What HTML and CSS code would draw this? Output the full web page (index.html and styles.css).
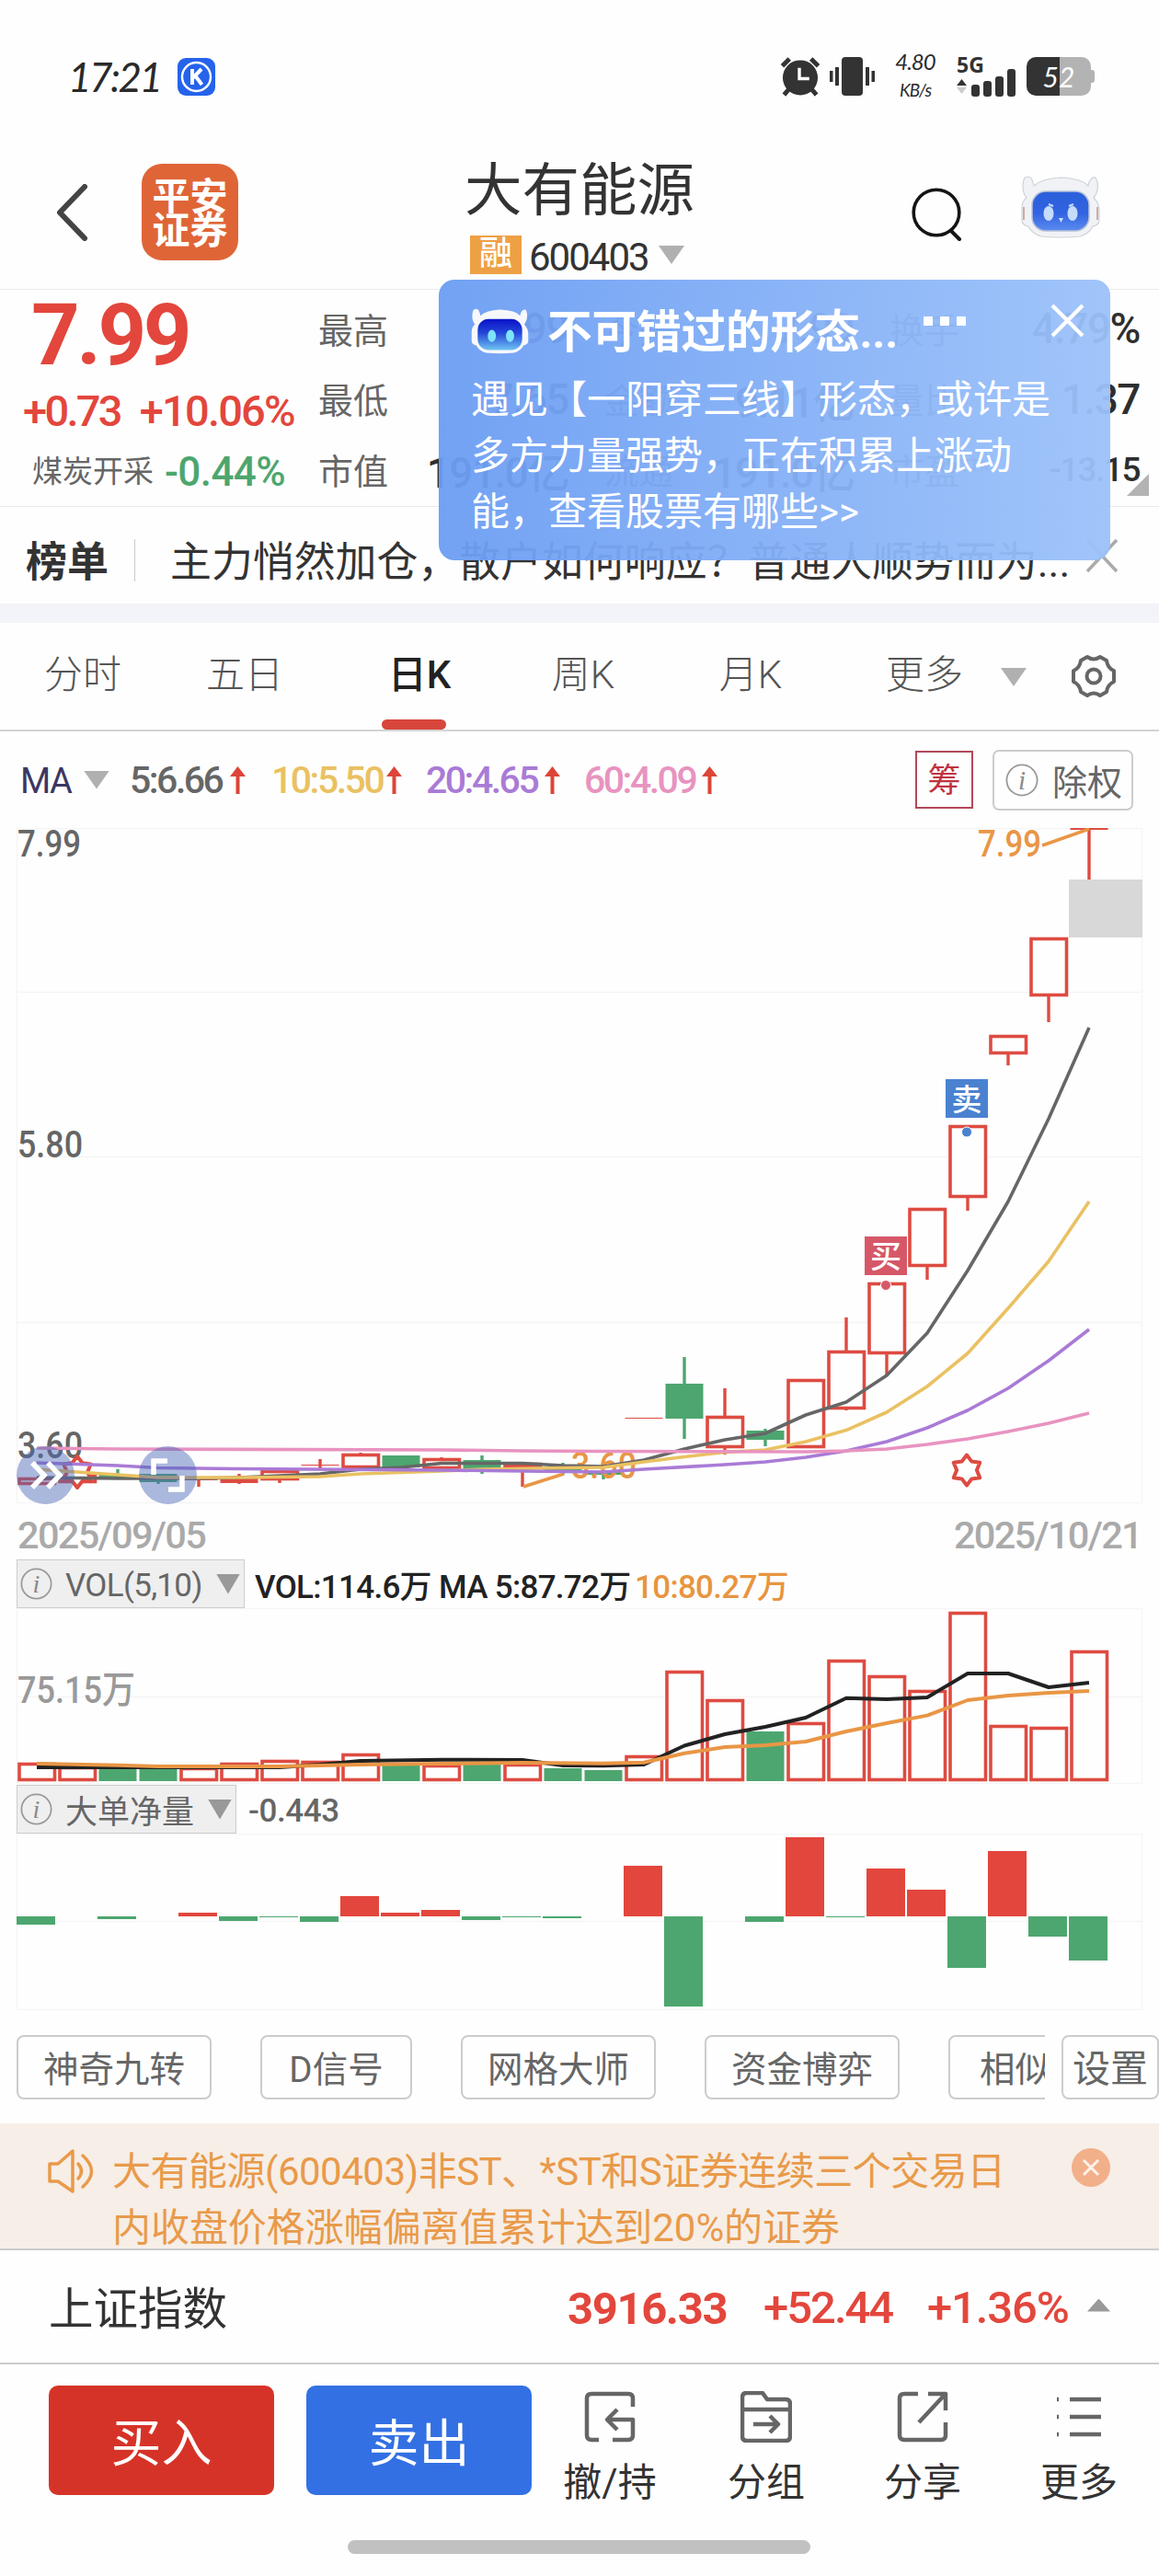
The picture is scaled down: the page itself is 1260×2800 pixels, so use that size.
FILE: index.html
```html
<!DOCTYPE html>
<html lang="zh-CN">
<head>
<meta charset="utf-8">
<title>大有能源 600403</title>
<link rel="stylesheet" href="styles.css">
</head>
<body>
<svg class="defs" width="0" height="0">
  <defs>
    <linearGradient id="face" x1="0" y1="0" x2="0" y2="1"><stop offset="0" stop-color="#2b5fdc"/><stop offset=".55" stop-color="#3263e0"/><stop offset="1" stop-color="#5b8cf0"/></linearGradient>
    <linearGradient id="faceDeep" x1="0" y1="0" x2="0" y2="1"><stop offset="0" stop-color="#0a12c8"/><stop offset=".45" stop-color="#2446d8"/><stop offset="1" stop-color="#6fc4f2"/></linearGradient>
    <symbol id="info" viewBox="0 0 36 36"><circle cx="18" cy="18" r="16.6" fill="none" stroke="#999" stroke-width="1.8"/><text x="18" y="28" font-family="Liberation Serif, serif" font-style="italic" font-size="29" fill="#8a8a8a" text-anchor="middle">i</text></symbol>
    <symbol id="up" viewBox="0 0 17 30"><path d="M8.500 0L17 11H10.500V30H6.500V11H0Z" fill="#dc4537"/></symbol>
  </defs>
</svg>
<main class="app">
  <div class="status">
    <span class="clock">17:21</span>
    <svg class="kapp" viewBox="0 0 41 41"><rect width="41" height="41" rx="9" fill="#2563eb"/><circle cx="20.500" cy="20.500" r="15.500" fill="none" stroke="#fff" stroke-width="2.400"/><path d="M16 12v17M26 12l-9 9.500M19 19l7.500 10" fill="none" stroke="#fff" stroke-width="4"/></svg>
    <svg class="alarm" viewBox="0 0 44 44" fill="#333"><circle cx="22" cy="23" r="19.500"/><path d="M2 10l8-8M42 10l-8-8" stroke="#333" stroke-width="5"/><path d="M10 35l-6 7M34 35l6 7" stroke="#333" stroke-width="5"/><path d="M21 12v12h11" fill="none" stroke="#fff" stroke-width="3.500"/></svg>
    <svg class="vibrate" viewBox="0 0 49 42" fill="#333"><rect x="13" width="23" height="42" rx="4"/><rect x="6" y="11" width="4" height="20"/><rect y="15" width="3.500" height="12"/><rect x="39" y="11" width="4" height="20"/><rect x="45.500" y="15" width="3.500" height="12"/></svg>
    <span class="speed"><span>4.80</span><span>KB/s</span></span>
    <span class="signal"><b>5G</b>
      <svg viewBox="0 0 64 30"><path d="M0 18h11L5.500 11z" fill="#333"/><path d="M0 20h11L5.500 27z" fill="#ccc"/><rect x="16" y="17" width="9" height="13" rx="3" fill="#333"/><rect x="29" y="13" width="9" height="17" rx="3" fill="#333"/><rect x="42" y="8" width="9" height="22" rx="3" fill="#333"/><rect x="55" y="0" width="9" height="30" rx="3" fill="#333"/></svg>
    </span>
    <span class="battery">52</span>
  </div>

  <header class="header">
    <svg class="back" viewBox="0 0 35 62"><path d="M31 3L4 31l27 28" fill="none" stroke="#444" stroke-width="6" stroke-linecap="round" stroke-linejoin="round"/></svg>
    <div class="logo">平安<br>证券</div>
    <div class="name">
      <h1>大有能源</h1>
      <div class="code"><span class="tag">融</span><span class="num">600403</span><i class="tri"></i></div>
    </div>
    <svg class="search" viewBox="0 0 56 58"><circle cx="27" cy="27" r="24.800" fill="none" stroke="#151515" stroke-width="3.600"/><path d="M43 47l9 9" stroke="#151515" stroke-width="4" stroke-linecap="round"/></svg>
    <svg class="robot" viewBox="0 0 86 68">
      <path d="M4 2C1 8 1 18 6 24 2 27 1 30 1 38v10q0 6 7 7 4 8 14 11 20 2 42 0 10-3 14-11 7-1 7-7V38q0-8-6-14c5-6 6-16 2-22-4-1-7 3-8 9Q66 3 43 2 23 3 14 11 12 1 8 1z" fill="#f0f2f6" stroke="#ced2d8" stroke-width="1.200"/>
      <path d="M3 34v14M83 34v14" stroke="#d3aaa5" stroke-width="2"/>
      <rect x="12" y="17" width="62" height="43" rx="15" fill="url(#face)" stroke="#b9c2d6" stroke-width="1.500"/>
      <ellipse cx="30" cy="41" rx="5.500" ry="8" fill="#c6dcfb"/><ellipse cx="56" cy="41" rx="5.500" ry="8" fill="#c6dcfb"/>
      <path d="M41 46h5l-2.500 5z" fill="#c6dcfb"/><path d="M30 31l5 2M52 33l5-2" stroke="#c6dcfb" stroke-width="2"/>
    </svg>
  </header>

  <section class="quote">
    <div class="price">
      <strong>7.99</strong>
      <div class="change"><span>+0.73</span><span class="pct">+10.06%</span></div>
      <div class="industry"><span>煤炭开采</span><em>-0.44%</em></div>
    </div>
    <div class="stats">
      <div><span>最高</span><b>7.99</b></div><div><span>今开</span><b>7.99</b></div><div><span>换手</span><b>4.79%</b></div>
      <div><span>最低</span><b>7.65</b></div><div><span>金额</span><b>9.11亿</b></div><div><span>量比</span><b>1.37</b></div>
      <div><span>市值</span><b>191.0亿</b></div><div><span>流通</span><b>191.0亿</b></div><div><span>市盈<sup>TTM</sup></span><b class="small">-13.15</b></div>
    </div>
    <i class="corner"></i>
  </section>

  <section class="news">
    <b>榜单</b><i class="bar"></i><span>主力悄然加仓，散户如何响应？普通人顺势而为...</span>
    <svg viewBox="0 0 36 38"><path d="M2 2l32 34M34 2L2 36" stroke="#aaa" stroke-width="3.500"/></svg>
  </section>

  <aside class="tip">
    <div class="tip-head">
      <svg class="robot-s" viewBox="0 0 86 68">
        <path d="M4 2C1 8 1 18 6 24 2 27 1 30 1 38v10q0 6 7 7 4 8 14 11 20 2 42 0 10-3 14-11 7-1 7-7V38q0-8-6-14c5-6 6-16 2-22-4-1-7 3-8 9Q66 3 43 2 23 3 14 11 12 1 8 1z" fill="#f7f8fb"/>
        <rect x="10" y="16" width="66" height="46" rx="16" fill="url(#faceDeep)"/>
        <ellipse cx="31" cy="41" rx="6" ry="9" fill="#7fe3fb"/><ellipse cx="58" cy="41" rx="6" ry="9" fill="#7fe3fb"/>
      </svg>
      <b>不可错过的形态...</b>
      <svg class="dots" viewBox="0 0 46 10" fill="#fff"><rect width="10" height="10"/><rect x="18" width="10" height="10"/><rect x="36" width="10" height="10"/></svg>
      <svg class="close" viewBox="0 0 37 37"><path d="M2 2l33 33M35 2L2 35" stroke="#fff" stroke-width="4.200"/></svg>
    </div>
    <p>遇见【一阳穿三线】形态，或许是<br>多方力量强势，正在积累上涨动<br>能，查看股票有哪些&gt;&gt;</p>
  </aside>

  <nav class="tabs">
    <span>分时</span><span>五日</span><span class="on">日K</span><span>周K</span><span>月K</span><span>更多</span>
    <i class="tri"></i>
    <svg viewBox="0 0 52 52" fill="none" stroke="#666" stroke-width="4"><path d="M19 5Q26 10 33 5L40 9Q41 17 48 20V32Q41 35 40 43L33 47Q26 42 19 47L12 43Q11 35 4 32V20Q11 17 12 9Z" stroke-linejoin="round"/><circle cx="26" cy="26" r="7.500"/></svg>
  </nav>

  <div class="ma">
    <span class="ma-name">MA</span><i class="tri"></i>
    <span class="v m5">5:6.66</span><svg class="up"><use href="#up"/></svg>
    <span class="v m10">10:5.50</span><svg class="up"><use href="#up"/></svg>
    <span class="v m20">20:4.65</span><svg class="up"><use href="#up"/></svg>
    <span class="v m60">60:4.09</span><svg class="up"><use href="#up"/></svg>
    <span class="chou">筹</span>
    <span class="adj"><svg><use href="#info"/></svg>除权</span>
  </div>

  <svg class="chart" id="kline" viewBox="0 900 1260 735" width="1260" height="735"></svg>
  <div class="dates"><span>2025/09/05</span><span>2025/10/21</span></div>

  <div class="ind">
    <span class="pick vol"><svg><use href="#info"/></svg><span>VOL(5,10)</span><i class="tri dark"></i></span>
    <span class="k1">VOL:114.6万</span><span class="k2">MA 5:87.72万</span><span class="k3">10:80.27万</span>
  </div>
  <svg class="chart" id="volume" viewBox="0 1748 1260 192" width="1260" height="192"></svg>

  <div class="ind">
    <span class="pick net"><svg><use href="#info"/></svg><span>大单净量</span><i class="tri dark"></i></span>
    <span class="netv">-0.443</span>
  </div>
  <svg class="chart" id="flow" viewBox="0 1993 1260 192" width="1260" height="192"></svg>

  <div class="chips">
    <div class="scroll"><span>神奇九转</span><span class="d">D信号</span><span>网格大师</span><span>资金博弈</span><span class="cut">相似</span></div>
    <span class="set">设置</span>
  </div>

  <div class="notice">
    <svg class="horn" viewBox="0 0 50 50" fill="none" stroke="#e99a4a" stroke-width="3.500" stroke-linejoin="round"><path d="M2 17h9L27 3v44L11 36H2Z"/><path d="M33 17q7 8 0 16M38 8q19 17 0 34" stroke-linecap="round"/></svg>
    <p>大有能源(600403)非ST、*ST和S证券连续三个交易日<br><span>内收盘价格涨幅偏离值累计达到20%的证券</span></p>
    <svg class="x" viewBox="0 0 42 42"><circle cx="21" cy="21" r="21" fill="#f2b08a"/><path d="M13 13l16 16M29 13L13 29" stroke="#fdf3ea" stroke-width="3"/></svg>
  </div>

  <div class="index">
    <span class="iname">上证指数</span><b>3916.33</b><span class="i1">+52.44</span><span class="i2">+1.36%</span><i class="tri-up"></i>
  </div>

  <footer class="actions">
    <button class="buy">买入</button><button class="sell">卖出</button>
    <div class="act"><svg viewBox="0 0 56 56"><path d="M53 17V8q0-5-5-5H8Q3 3 3 8v40q0 5 5 5h8M31 53h17q5 0 5-5V31H26M36 20L25 31l11 11"/></svg><span>撤/持</span></div>
    <div class="act"><svg viewBox="0 0 56 56"><path d="M2 7q0-5 5-5h17l5 7h20q5 0 5 5v35q0 5-5 5H7q-5 0-5-5ZM2 20h52M14 36h26M32 27l9 9-9 9"/></svg><span>分组</span></div>
    <div class="act"><svg viewBox="0 0 56 56"><path d="M23 3H8Q3 3 3 8v40q0 5 5 5h40q5 0 5-5V34M34 3h19v18M53 3L24 34"/></svg><span>分享</span></div>
    <div class="act more"><svg viewBox="0 0 56 56"><path d="M4 9h2M18 9h34M4 28h2M18 28h34M4 47h2M18 47h34"/></svg><span>更多</span></div>
  </footer>
  <div class="home"></div>
</main>
<script src="chart.js"></script>
</body>
</html>
```
FILE: styles.css
```css
* { box-sizing: border-box; }
body { margin: 0; background: #fff; font-family: Roboto, "Noto Sans CJK SC", sans-serif; color: #333; }
.defs { position: absolute; }
.app { width: 1260px; height: 2800px; overflow: hidden; position: relative; background: #fefefe; display: flex; flex-direction: column; }
.app > * { flex: none; }
svg { display: block; }
i { font-style: normal; }
.tri { width: 28px; height: 20px; background: #b0b0b0; clip-path: polygon(0 0, 100% 0, 50% 100%); flex: none; }
.tri.dark { background: #999; }

.status { height: 170px; padding: 62px 74px 0 74px; display: flex; align-items: flex-start; }
.clock { width: 119px; font: italic 400 44px/43px Lato, sans-serif; letter-spacing: -2.500px; color: #2a2a2a; white-space: nowrap; }
.kapp { width: 41px; height: 41px; margin-top: 1px; }
.alarm { width: 44px; height: 43px; margin-left: auto; }
.vibrate { width: 49px; height: 42px; margin-left: 10px; }
.speed { width: 44px; margin: -11px 0 0 22px; display: flex; flex-direction: column; align-items: center; font: italic 400 24px/31px Lato, sans-serif; letter-spacing: -1px; color: #2a2a2a; }
.speed span + span { font-size: 19px; }
.signal { margin-left: 23px; width: 64px; }
.signal b { display: block; font: bold 23px/16px "Noto Sans", sans-serif; height: 13px; }
.signal svg { width: 64px; height: 30px; }
.battery { position: relative; margin-left: 12px; width: 70px; height: 42px; border-radius: 10px; background: linear-gradient(90deg, #333 36px, #b3b3b3 36px); color: #fff; font: italic 400 30px/42px Lato, sans-serif; text-align: center; }
.battery::after { content: ""; position: absolute; right: -4px; top: 14px; width: 4px; height: 14px; background: #b3b3b3; border-radius: 0 3px 3px 0; }

.header { height: 145px; padding-left: 61px; display: flex; align-items: flex-start; border-bottom: 1px solid #ebebeb; }
.back { width: 35px; height: 62px; margin-top: 30px; }
.logo { width: 105px; height: 105px; margin: 8px 0 0 58px; border-radius: 22px; background: #df6537; color: #fff; font-weight: 700; font-size: 41px; line-height: 37px; text-align: center; padding-top: 18px; }
.name { width: 252px; margin-left: 246px; }
h1 { margin: 0; font-size: 62.500px; font-weight: 400; line-height: 75px; height: 80px; white-space: nowrap; }
.code { display: flex; align-items: center; margin-left: 6px; height: 52px; margin-top: 1px; }
.tag { width: 56px; height: 42px; background: #eea044; color: #fff; font-size: 36px; line-height: 41px; text-align: center; font-weight: 500; }
.num { font-size: 42px; letter-spacing: -2px; margin-left: 8px; width: 141px; margin-top: 5px; }
.code .tri { margin-top: 0; }
.search { width: 56px; height: 58px; margin: 34px 0 0 234px; }
.robot { width: 86px; height: 68px; margin: 21px 0 0 63px; }

.quote { height: 236px; display: flex; position: relative; border-bottom: 1px solid #e8e8e8; }
.price { width: 346px; color: #e3463c; }
.price strong { display: block; margin: 4px 0 0 34px; font-size: 92px; line-height: 92px; letter-spacing: -3.500px; font-weight: 700; }
.change { display: flex; font-size: 47px; line-height: 50px; font-weight: 500; margin: 11px 0 0 25px; letter-spacing: -2.700px; white-space: nowrap; }
.pct { margin-left: 21px; letter-spacing: -1.800px; }
.industry { display: flex; align-items: center; margin: 16px 0 0 35px; font-size: 33px; line-height: 50px; color: #666; white-space: nowrap; }
.industry em { font-style: normal; color: #4da66f; font-size: 44px; font-weight: 500; margin-left: 12px; letter-spacing: -.6px; }
.stats { width: 893px; display: grid; grid-template-columns: 272px 272px 272px; grid-auto-rows: 76.500px; column-gap: 38.500px; padding-top: 4px; }
.stats div { display: flex; align-items: center; justify-content: space-between; font-size: 38px; color: #666; }
.stats div > span { padding-bottom: 2px; }
.stats b { font-weight: 500; font-size: 46px; color: #2e2e2e; letter-spacing: -1.500px; }
.stats b.small { font-size: 37px; }
.stats sup { font-size: 18px; line-height: 0; }
.corner { position: absolute; right: 11px; bottom: 11px; width: 24px; height: 24px; background: #b3b3b3; clip-path: polygon(100% 0, 100% 100%, 0 100%); }

.news { height: 126px; padding: 24px 0 0 28px; display: flex; align-items: flex-start; font-size: 45px; line-height: 74px; color: #333; white-space: nowrap; border-bottom: 21px solid #f3f4f9; }
.news b { width: 118px; font-weight: 700; }
.bar { width: 1px; height: 46px; background: #ccc; margin: 11px 38px 0 0; }
.news span { width: 995px; font-size: 44.900px; }
.news svg { width: 36px; height: 38px; margin-top: 10px; }

.tip { position: absolute; left: 477px; top: 304px; width: 730px; height: 305px; border-radius: 17px; background: linear-gradient(90deg, rgba(107, 157, 243, .95), rgba(156, 194, 250, .95)); color: #fff; padding: 0 0 0 35px; }
.tip-head { display: flex; height: 100px; padding-top: 26px; }
.robot-s { width: 63px; height: 50px; margin-top: 5px; }
.tip-head b { margin-left: 20px; width: 409px; font-size: 48.700px; line-height: 64px; font-weight: 700; white-space: nowrap; letter-spacing: -.2px; }
.dots { width: 46px; height: 10px; margin-top: 14px; }
.close { width: 37px; height: 37px; margin-left: 92px; }
.tip p { margin: 0; font-size: 42px; line-height: 61px; white-space: nowrap; }

.tabs { height: 118px; display: grid; grid-template-columns: 180px 172px 208px 148px 216px 162px 28px 52px; column-gap: 0; border-bottom: 2px solid #d3d3d3; font-size: 42px; font-weight: 300; color: #555; }
.tabs span { text-align: center; line-height: 114px; height: 116px; position: relative; }
.tabs .on { font-weight: 500; color: #222; }
.tabs .on::after { content: ""; position: absolute; left: 63px; bottom: 0; width: 70px; height: 11px; border-radius: 6px; background: #d8463b; }
.tabs .tri { margin: 49px 0 0 2px; }
.tabs svg { width: 52px; height: 52px; margin: 32px 0 0 49px; }

.ma { height: 105px; display: flex; align-items: center; padding: 0 28px 0 22px; white-space: nowrap; }
.ma-name { font-size: 38px; width: 69px; letter-spacing: -1.500px; color: #3b3763; margin-top: 3px; }
.v { font-size: 41px; font-weight: 500; letter-spacing: -2.500px; }
.m5 { margin-left: 22px; width: 109px; color: #666; }
.m10 { margin-left: 28px; width: 125px; color: #eac162; }
.m20 { margin-left: 26px; width: 129px; color: #a97bd6; }
.m60 { margin-left: 26px; width: 128px; color: #e893c0; }
.up { width: 17px; height: 30px; }
.chou { margin-left: auto; width: 63px; height: 63px; border: 2px solid #b2485a; color: #bf3340; font-size: 36px; line-height: 62px; text-align: center; }
.adj { margin-left: 21px; width: 153px; height: 66px; border: 2px solid #ccc; border-radius: 7px; display: flex; align-items: center; font-size: 38px; color: #666; padding-left: 12px; }
.adj svg { width: 36px; height: 36px; margin-right: 15px; }

.chart text { font-family: Roboto, "Noto Sans CJK SC", sans-serif; }
.dates { height: 60px; padding: 0 19px 0 19px; display: flex; justify-content: space-between; font-size: 41.500px; line-height: 67px; color: #aaa; font-weight: 500; letter-spacing: -1.700px; }
.ind { height: 53px; display: flex; align-items: center; padding-left: 18px; font-size: 35px; font-weight: 500; white-space: nowrap; color: #222; }
.pick { height: 53px; background: #efefef; border: 1px solid #ccc; display: flex; align-items: center; padding-left: 3px; color: #666; font-weight: 400; }
.pick svg { width: 35px; height: 35px; margin-right: 14px; }
.pick .tri { width: 26px; height: 22px; margin-right: 4px; margin-left: auto; }
.vol { width: 248px; }
.vol span { letter-spacing: -.7px; margin-top: 3px; }
.net { width: 239px; }
.k1 { margin-left: 11px; width: 200px; }
.k2 { width: 213px; }
.k3 { color: #e8953f; }
.k1, .k2, .k3 { letter-spacing: -.7px; }
.netv { margin-left: 13px; color: #666; letter-spacing: -.4px; margin-top: 3px; }

.chips { height: 123px; padding: 27px 0 0 18px; display: flex; font-size: 38.500px; color: #666; white-space: nowrap; }
.scroll { width: 1119px; overflow: hidden; display: flex; gap: 53px; margin-right: 18px; }
.chips span { flex: none; width: 212px; height: 70px; border: 2px solid #ccc; border-radius: 8px; text-align: center; line-height: 71px; }
.chips .d { width: 165px; }
.chips .cut { text-align: left; padding-left: 32px; }
.chips .set { width: 106px; font-size: 41px; }

.notice { height: 136px; background: #f6eee7; display: flex; align-items: flex-start; color: #e99a4a; padding: 22px 0 0 52px; }
.horn { width: 50px; height: 50px; margin-top: 5px; }
.notice p { margin: 0 0 0 20px; width: 1043px; font-size: 42px; line-height: 61px; white-space: nowrap; letter-spacing: -.5px; }
.notice p span { letter-spacing: -.05px; }
.notice .x { width: 42px; height: 42px; margin-top: 5px; }

.index { height: 124px; border-top: 2px solid #ccc; display: flex; align-items: center; padding-left: 53px; font-size: 49px; white-space: nowrap; color: #e3463c; }
.iname { color: #333; width: 564px; font-size: 48.500px; padding-bottom: 3px; }
.index b { width: 213px; letter-spacing: -1.400px; padding-top: 4px; }
.i1 { width: 178px; font-weight: 500; letter-spacing: -2px; padding-top: 2px; }
.i2 { width: 174px; font-weight: 500; letter-spacing: -1.100px; padding-top: 2px; }
.tri-up { width: 25px; height: 14px; background: #999; clip-path: polygon(50% 0, 100% 100%, 0 100%); margin-bottom: 3px; }

.actions { height: 193px; border-top: 2px solid #ccc; display: flex; padding: 23px 0 0 53px; align-items: flex-start; }
button { width: 245px; height: 119px; border: 0; border-radius: 10px; color: #fff; font: 400 55px/120px Roboto, "Noto Sans CJK SC", sans-serif; padding: 3px 0 0; }
.buy { background: #d63328; }
.sell { background: #3370e3; margin: 0 0 0 35px; }
.act { width: 170px; display: flex; flex-direction: column; align-items: center; font-size: 42px; line-height: 60px; color: #333; padding-top: 6px; }
.act svg { width: 56px; height: 56px; fill: none; stroke: #666; stroke-width: 4.500; stroke-linejoin: round; }
.act span { margin-top: 14px; }
.home { width: 503px; height: 15px; border-radius: 8px; background: #c1c1c1; margin-left: 378px; }
```
FILE: chart.js
```js
const RED = '#de4b41', GREEN = '#4da66f';
const x = i => 40 + 44 * i;

const line = (pts, color, w) =>
  `<polyline points="${pts.map(p => p.join(',')).join(' ')}" fill="none" stroke="${color}" stroke-width="${w}" stroke-linejoin="round"/>`;
const grid = (top, rows, bottom) =>
  `<rect x="18.500" y="${top + .5}" width="1223" height="${bottom - top - 1}" fill="none" stroke="#f5f5f5" stroke-width="1.500"/>` +
  rows.map(y => `<path d="M18 ${y}H1242" stroke="#f5f5f5" stroke-width="1.500"/>`).join('');
const txt = (s, px, y, size, color, width, extra = '') =>
  `<text x="${px}" y="${y}" font-size="${size}" fill="${color}" textLength="${width}" lengthAdjust="spacingAndGlyphs" ${extra}>${s}</text>`;
const box = (i, top, bottom) =>
  `<rect x="${x(i) - 19}" y="${top + 1.5}" width="38.500" height="${Math.max(bottom - top - 3, 1)}" fill="#fefefe" stroke="${RED}" stroke-width="3.600"/>`;
const star = (cx, cy, r) => {
  const p = [];
  for (let k = 0; k < 12; k++) {
    const a = Math.PI * k / 6 - Math.PI / 2, q = k % 2 ? r * .66 : r;
    p.push((cx + q * Math.cos(a)).toFixed(1) + ',' + (cy + q * Math.sin(a)).toFixed(1));
  }
  return `<polygon points="${p.join(' ')}" fill="#fefefe" stroke="${RED}" stroke-width="4" stroke-linejoin="round"/>`;
};

// [kind, body top, body bottom, wick top, wick bottom]
const candles = [
  ['r', 1606, 1614, 1606, 1614], ['r', 1603, 1612, 1603, 1612], ['g', 1603, 1606, 1597, 1606],
  ['g', 1602, 1611, 1602, 1613], ['-', 1608, 1609, 1608, 1616], ['R', 1607, 1612, 1602, 1613],
  ['r', 1598, 1609, 1598, 1612], ['-', 1592, 1593, 1586, 1596], ['r', 1580, 1596, 1579, 1596],
  ['g', 1582, 1595, 1582, 1595], ['r', 1585, 1597, 1584, 1597], ['g', 1587, 1597, 1582, 1602],
  ['r', 1590, 1596, 1590, 1616], ['g', 1596, 1600, 1590, 1603], ['g', 1600, 1603, 1600, 1608],
  ['-', 1541, 1542, 1541, 1542], ['g', 1504, 1542, 1475, 1564], ['r', 1539, 1574, 1509, 1581],
  ['g', 1555, 1565, 1553, 1572], ['r', 1499, 1574, 1499, 1574], ['r', 1468, 1532, 1432, 1533],
  ['r', 1394, 1472, 1394, 1495], ['r', 1313, 1377, 1313, 1391], ['r', 1223, 1302, 1223, 1316],
  ['r', 1125, 1146, 1125, 1158], ['r', 1019, 1083, 1019, 1111], ['-', 900, 902, 900, 956]
];
let s = grid(900, [1078.5, 1257.5, 1437.5], 1634);
s += txt('7.99', 19, 931, 41, '#666', 69, 'font-weight="500"') + txt('5.80', 19, 1258, 41, '#666', 71, 'font-weight="500"') + txt('3.60', 19, 1585, 41, '#666', 71, 'font-weight="500"');
candles.forEach(([k, t, b, wt, wb], i) => {
  const c = k === 'g' ? GREEN : RED;
  if (wb > wt + 1) s += `<path d="M${x(i)} ${wt}V${wb}" stroke="${c}" stroke-width="3.400"/>`;
  if (k === 'r') s += box(i, t, b);
  else s += `<rect x="${x(i) - 20.5}" y="${t}" width="41" height="${b - t}" fill="${c}"/>`;
});
s += '<rect x="1162" y="956" width="80" height="63" fill="#d8d8d8"/>';
s += star(84, 1600, 17);
s += '<path d="M1133 919L1184 901M569 1616L613 1602" stroke="#e99645" stroke-width="3.500"/>';
s += txt('7.99', 1063, 931, 41, '#e99645', 69, 'font-weight="500"') + txt('3.60', 621, 1607, 41, '#e99645', 71, 'font-weight="500"');
s += line([[40,1606],[128,1607],[216,1607],[260,1606],[348,1602],[392,1597],[436,1595],[480,1590.5],[568,1590.5],[612,1593],[656,1594],[700,1587],[744,1575],[788,1565],[832,1558],[876,1538],[920,1524],[964,1495],[1008,1449],[1052,1381],[1096,1306],[1140,1216],[1184,1117]], '#666', 3.6);
s += line([[40,1597],[128,1603],[172,1606],[260,1606],[348,1605],[392,1602],[480,1599],[524,1597],[612,1595.5],[656,1595],[700,1589],[744,1583.5],[788,1578.5],[832,1576],[876,1567],[920,1554.6],[964,1535],[1008,1507],[1052,1471],[1096,1422],[1140,1371],[1184,1306]], '#eac162', 3.6);
s += line([[40,1590],[128,1593],[172,1595.5],[260,1596.5],[480,1598],[568,1599],[656,1600],[700,1597],[788,1592],[832,1589],[876,1584],[920,1577],[964,1567],[1008,1552],[1052,1533],[1096,1509],[1140,1479],[1184,1445]], '#a97bd6', 3.6);
s += line([[40,1574],[128,1575],[480,1576],[568,1577],[656,1577.5],[876,1578],[920,1577],[964,1575],[1008,1570],[1052,1564],[1096,1556],[1140,1547],[1184,1536]], '#e893c0', 3.6);
s += star(1051, 1598, 16.5);
s += '<rect x="940" y="1344" width="46" height="42" fill="#d65868"/>' + '<text x="963" y="1378" font-size="34" font-weight="500" fill="#fff" text-anchor="middle">买</text><circle cx="963" cy="1397" r="5.500" fill="#d65868" stroke="#fff"/>';
s += '<rect x="1028" y="1173" width="46" height="42" fill="#4a82d0"/>' + '<text x="1051" y="1207" font-size="33" font-weight="500" fill="#fff" text-anchor="middle">卖</text><circle cx="1051" cy="1230.500" r="5.500" fill="#4a82d0" stroke="#fff"/>';
s += '<circle cx="49.500" cy="1603.500" r="31.500" fill="#4a66b8" opacity=".46"/><circle cx="182.500" cy="1603.500" r="31.500" fill="#4a66b8" opacity=".46"/>';
s += '<path d="M35 1590l13 13.500L35 1617M52 1590l13 13.500L52 1617M167 1603V1588H182M183 1619H198V1604" fill="none" stroke="#fff" stroke-width="5.500"/>';
document.getElementById('kline').innerHTML = s;

// [kind, top] – every column stands on the same base line
const vol = 'r1916 r1920 g1921 g1923 r1921 r1916 r1913 r1914 r1906 g1918 r1918 g1917 r1917 g1922 g1924 r1908 r1816 r1847 g1882 r1872 r1804 r1821 r1837 r1752 r1875 r1877 r1794'.split(' ');
s = grid(1748, [1844.5], 1939);
s += txt('75.15万', 19, 1851, 41, '#999', 128, 'font-weight="500"');
vol.forEach((v, i) => {
  const t = +v.slice(1);
  s += v[0] === 'r' ? box(i, t, 1936) : `<rect x="${x(i) - 20.5}" y="${t}" width="41" height="${1936 - t}" fill="${GREEN}"/>`;
});
s += line([[40,1921],[304,1921],[348,1918],[392,1914],[480,1912.7],[568,1913],[612,1919],[656,1919.3],[700,1918],[744,1897.5],[788,1885],[832,1877],[876,1867],[920,1845.7],[964,1847],[1008,1845],[1052,1819],[1096,1819],[1140,1834],[1184,1829]], '#222', 4);
s += line([[40,1917],[128,1918.7],[172,1920],[304,1920],[392,1918],[480,1917],[568,1916],[656,1916.8],[700,1915.7],[744,1905.7],[788,1899],[832,1897],[876,1893],[920,1882],[964,1873],[1008,1864.6],[1052,1848],[1096,1843],[1140,1840],[1184,1838]], '#e99645', 4);
document.getElementById('volume').innerHTML = s;

const flow = [-9,0,-3,0,4,-5,-1,-6,22,4,7,-4,-1,-2,0,55,-98,0,-6,86,-1,52,29,-56,71,-22,-48];
s = grid(1993, [2088.5], 2185);
flow.forEach((v, i) => {
  if (v) s += `<rect x="${x(i) - 22}" y="${v > 0 ? 2083 - v : 2083}" width="42" height="${Math.abs(v)}" fill="${v > 0 ? '#e3463c' : GREEN}"/>`;
});
document.getElementById('flow').innerHTML = s;
```
